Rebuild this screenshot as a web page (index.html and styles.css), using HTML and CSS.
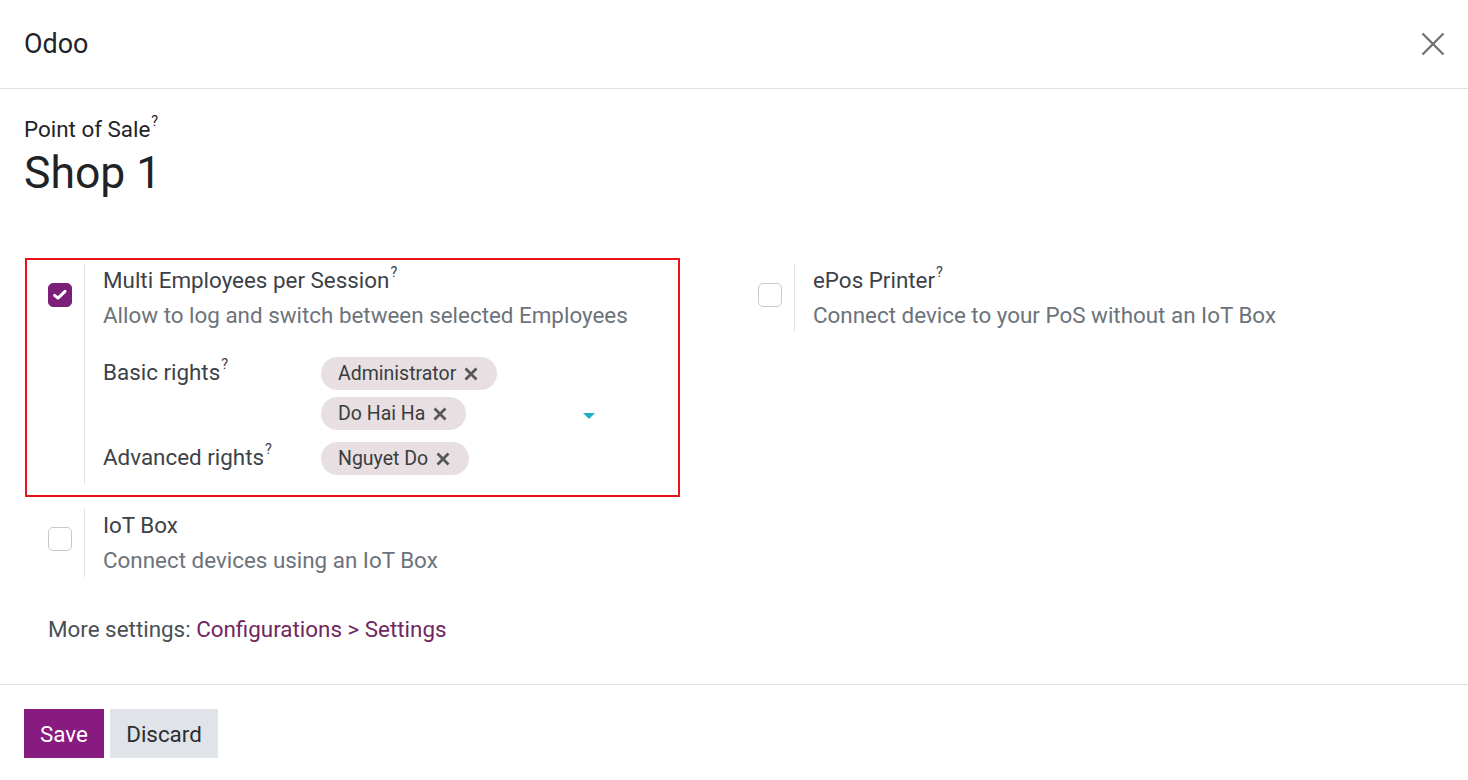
FILE: index.html
```html
<!DOCTYPE html>
<html>
<head>
<meta charset="utf-8">
<link rel="stylesheet" href="styles.css">
</head>
<body>
<div class="dialog">
  <header class="dlg-header">
    <h4 class="dlg-title">Odoo</h4>
    <button class="close-btn" aria-label="Close">
      <svg width="24" height="24" viewBox="0 0 24 24"><path d="M1.5 1.5 L22.5 22.5 M22.5 1.5 L1.5 22.5" stroke="#6f6f6f" stroke-width="2.2" fill="none"/></svg>
    </button>
  </header>
  <main class="dlg-body">
    <div class="pos-label">Point of Sale<sup>?</sup></div>
    <h1 class="pos-name">Shop 1</h1>

    <div class="settings">
      <div class="setting highlighted">
        <div class="annot"></div>
        <div class="setting-left">
          <span class="cbox checked">
            <svg width="16" height="16" viewBox="0 0 16 16"><path d="M2.6 8.4 L6 11.2 L13 4.4" stroke="#fff" stroke-width="3" fill="none" stroke-linecap="round" stroke-linejoin="round"/></svg>
          </span>
        </div>
        <div class="setting-right">
          <div class="s-title">Multi Employees per Session<sup>?</sup></div>
          <div class="s-desc">Allow to log and switch between selected Employees</div>
          <div class="rights">
            <div class="rights-row">
              <div class="r-label">Basic rights<sup>?</sup></div>
              <div class="r-field">
                <div class="tags">
                  <span class="tag">Administrator<svg class="tag-x" width="14" height="14" viewBox="0 0 14 14"><path d="M1.5 1.5 L12.5 12.5 M12.5 1.5 L1.5 12.5" stroke="#575757" stroke-width="2.8" fill="none"/></svg></span>
                  <span class="tag">Do Hai Ha<svg class="tag-x" width="14" height="14" viewBox="0 0 14 14"><path d="M1.5 1.5 L12.5 12.5 M12.5 1.5 L1.5 12.5" stroke="#575757" stroke-width="2.8" fill="none"/></svg></span>
                  <span class="filler"></span>
                  <span class="caret"></span>
                </div>
              </div>
            </div>
            <div class="rights-row second">
              <div class="r-label">Advanced rights<sup>?</sup></div>
              <div class="r-field">
                <div class="tags">
                  <span class="tag">Nguyet Do<svg class="tag-x" width="14" height="14" viewBox="0 0 14 14"><path d="M1.5 1.5 L12.5 12.5 M12.5 1.5 L1.5 12.5" stroke="#575757" stroke-width="2.8" fill="none"/></svg></span>
                </div>
              </div>
            </div>
          </div>
        </div>
      </div>

      <div class="setting">
        <div class="setting-left">
          <span class="cbox"></span>
        </div>
        <div class="setting-right">
          <div class="s-title">ePos Printer<sup>?</sup></div>
          <div class="s-desc">Connect device to your PoS without an IoT Box</div>
        </div>
      </div>

      <div class="setting">
        <div class="setting-left second-row">
          <span class="cbox"></span>
        </div>
        <div class="setting-right">
          <div class="s-title">IoT Box</div>
          <div class="s-desc">Connect devices using an IoT Box</div>
        </div>
      </div>
    </div>

    <div class="more">More settings: <a class="more-link" href="#">Configurations &gt; Settings</a></div>
  </main>
  <footer class="dlg-footer">
    <button class="btn btn-primary">Save</button>
    <button class="btn btn-secondary">Discard</button>
  </footer>
</div>
</body>
</html>
```

FILE: styles.css
```css
* { box-sizing: border-box; }
html, body { margin: 0; padding: 0; background: #fff; }
body {
  font-family: Roboto, "Liberation Sans", Arial, sans-serif;
  font-size: 22.4px;
  color: #374151;
}
.dialog {
  width: 1468px;
  height: 780px;
  display: flex;
  flex-direction: column;
}
.dlg-header {
  height: 89px;
  border-bottom: 1px solid #dee2e6;
  display: flex;
  align-items: center;
  justify-content: space-between;
  padding: 0 24px 1px 24px;
}
.dlg-title {
  margin: 0;
  font-weight: 400;
  font-size: 26.9px;
  color: #1f2328;
  line-height: 32px;
}
.close-btn {
  border: 0;
  background: none;
  padding: 0;
  width: 24px;
  height: 24px;
  margin-right: -1px;
  display: flex;
  cursor: pointer;
}
.dlg-body {
  flex: 1;
  padding: 25px 24px 0 24px;
}
sup {
  font-size: 14.5px;
  line-height: 0;
  position: relative;
  top: -3px;
  vertical-align: super;
  margin-left: 1px;
}
.pos-label {
  line-height: 30px;
  color: #1f2328;
}
.pos-name {
  margin: 3px 0 0 0;
  font-size: 44.5px;
  font-weight: 400;
  line-height: 53px;
  color: #1f2328;
}
.settings {
  margin-top: 64px;
  display: grid;
  grid-template-columns: 710px 710px;
  row-gap: 25px;
  align-items: start;
}
.setting {
  display: flex;
  position: relative;
}
.annot {
  position: absolute;
  left: 1px;
  top: -6px;
  width: 655px;
  height: 239px;
  border: 2.5px solid #e8141c;
  pointer-events: none;
}
.setting-left {
  width: 60px;
  padding: 19px 0 0 24px;
  flex: none;
}
.setting-left.second-row { padding-top: 18px; }
.cbox {
  display: flex;
  align-items: center;
  justify-content: center;
  width: 24px;
  height: 24px;
  border: 1px solid #c5c9ce;
  border-radius: 5px;
  background: #fff;
}
.cbox.checked {
  background: #7b1f78;
  border-color: #7b1f78;
}
.setting-right {
  border-left: 1px solid #dee2e6;
  padding-left: 18px;
  padding-top: 1px;
  padding-bottom: 2px;
}
.highlighted .setting-right { padding-bottom: 9px; }
.s-title {
  line-height: 30px;
  color: #3d4248;
}
.s-desc {
  margin-top: 5px;
  line-height: 30px;
  color: #6c737a;
}
.rights { margin-top: 27px; }
.rights-row {
  display: flex;
  align-items: flex-start;
}
.rights-row.second { margin-top: 12px; }
.r-label {
  width: 218px;
  flex: none;
  line-height: 30px;
  color: #3d4248;
}
.r-field { width: 280px; }
.tags {
  display: flex;
  flex-wrap: wrap;
  align-items: center;
  row-gap: 7px;
}
.tag {
  display: inline-flex;
  align-items: center;
  height: 33px;
  padding: 0 19px 0 17px;
  border-radius: 17px;
  background: #e7dfe1;
  color: #3a3d40;
  font-size: 19.5px;
  white-space: nowrap;
}
.tag-x {
  margin-left: 8px;
  flex: none;
}
.filler { flex: 1; height: 33px; }
.caret {
  width: 0;
  height: 0;
  border-left: 6px solid transparent;
  border-right: 6px solid transparent;
  border-top: 6px solid #1fb0c0;
  margin: 4px 6px 0 0;
}
.more {
  margin-top: 37px;
  padding-left: 24px;
  line-height: 30px;
  color: #4a4f55;
}
.more-link {
  color: #70265f;
  text-decoration: none;
}
.dlg-footer {
  border-top: 1px solid #dee2e6;
  padding: 24px 24px 22px 24px;
  display: flex;
  gap: 6px;
}
.btn {
  height: 49px;
  border: 0;
  font-family: inherit;
  font-size: 22.4px;
  padding: 0;
  cursor: pointer;
}
.btn-primary {
  background: #871b80;
  color: #fff;
  width: 80px;
}
.btn-secondary {
  background: #e0e3e7;
  color: #2b2f33;
  width: 108px;
}
```
